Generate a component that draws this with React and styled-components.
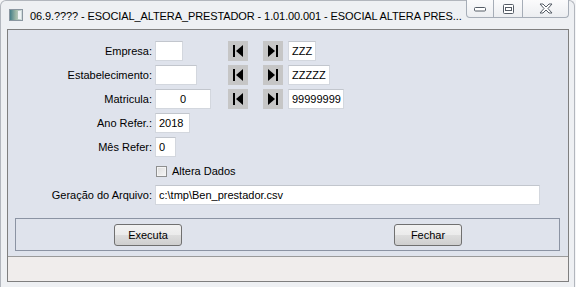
import React from "react";
import styled, { createGlobalStyle } from "styled-components";

const GlobalStyle = createGlobalStyle`
  body {
    margin: 0;
    background: #f4f5f7;
    font-family: "Liberation Sans", Arial, sans-serif;
  }
`;

const Window = styled.div`
  width: 575px;
  height: 287px;
  box-sizing: border-box;
  background: #eef0f3;
  border: 1px solid #b2b6bd;
  border-bottom: none;
  border-radius: 6px 6px 0 0;
  padding: 0 5px 0 6px;
  display: flex;
  flex-direction: column;
`;

const TitleBar = styled.div`
  height: 28px;
  display: flex;
  align-items: flex-start;
`;

const TitleLeft = styled.div`
  flex: 1;
  min-width: 0;
  overflow: hidden;
  height: 28px;
  display: flex;
  align-items: center;
  padding-left: 2px;
  gap: 7px;

  svg {
    flex-shrink: 0;
  }
`;

const TitleText = styled.span`
  font-size: 11px;
  letter-spacing: -0.1px;
  color: #000;
  white-space: nowrap;
  margin-top: 2px;
`;

const Controls = styled.div`
  display: flex;
  flex-shrink: 0;
  margin-top: -1px;
`;

const CtrlBtn = styled.div`
  width: ${(p) => p.$w}px;
  height: 18px;
  box-sizing: border-box;
  border: 1px solid #a6adb7;
  border-left: ${(p) => (p.$first ? "1px solid #a6adb7" : "none")};
  border-top: none;
  background: linear-gradient(#fbfbfc, #eceef1);
  border-radius: ${(p) => p.$radius || "0"};
  display: flex;
  align-items: center;
  justify-content: center;
`;

const Client = styled.div`
  height: 253px;
  box-sizing: border-box;
  border: 1px solid #7f7f7f;
  display: flex;
  flex-direction: column;
`;

const FormArea = styled.div`
  flex: 1;
  background: #dfe3ec;
  padding-top: 11px;
  display: flex;
  flex-direction: column;
`;

const Rows = styled.div`
  display: flex;
  flex-direction: column;
  gap: 4px;
`;

const Row = styled.div`
  display: grid;
  grid-template-columns: 144px 1fr;
  column-gap: 3px;
  height: 20px;
  align-items: center;
`;

const Label = styled.label`
  font-size: 11px;
  color: #000;
  text-align: right;
  white-space: nowrap;
`;

const Field = styled.div`
  display: flex;
  align-items: center;
  height: 20px;
`;

const FieldSlot = styled.div`
  width: 73px;
  display: flex;
`;

const Input = styled.div`
  width: ${(p) => p.$w}px;
  height: 20px;
  box-sizing: border-box;
  background: #fff;
  border: 1px solid #d3d7de;
  border-top-color: #c2c6cd;
  font-size: 11px;
  color: #000;
  line-height: 18px;
  padding: 0 3px;
  text-align: ${(p) => p.$align || "left"};
  white-space: nowrap;
  overflow: hidden;
`;

const NavBtn = styled.div`
  width: 20px;
  height: 20px;
  background: #c6c6c6;
  margin-right: ${(p) => p.$mr}px;
  display: flex;
  align-items: center;
  justify-content: center;
`;

const CheckWrap = styled.div`
  display: flex;
  align-items: center;
  gap: 5px;
  padding-left: 1px;
  font-size: 11px;
`;

const CheckBox = styled.span`
  width: 11px;
  height: 11px;
  box-sizing: border-box;
  border: 1px solid #8e8f8f;
  background: linear-gradient(135deg, #dcdcdc, #f6f6f6);
  box-shadow: inset 0 0 0 1px #f4f4f4;
`;

const Group = styled.div`
  margin: 13px 8px 0 7px;
  height: 33px;
  box-sizing: border-box;
  border: 1px solid #8b93a3;
  display: flex;
  align-items: center;
  padding-left: 98px;
  gap: 212px;
`;

const Button = styled.button`
  width: 68px;
  height: 22px;
  box-sizing: border-box;
  border: 1px solid #707070;
  border-radius: 3px;
  background: linear-gradient(#f2f2f2 0%, #ebebeb 50%, #dddddd 51%, #cfcfcf 100%);
  font-family: "Liberation Sans", Arial, sans-serif;
  font-size: 11px;
  color: #000;
  padding: 0;
`;

const StatusBar = styled.div`
  height: 24px;
  border-top: 1px solid #9a9a9a;
  background: #f0edec;
`;

const FirstIcon = () => (
  <svg width="12" height="14" viewBox="0 0 12 14">
    <rect x="1" y="1" width="2" height="12" fill="#000" />
    <polygon points="11,1 4,7 11,13" fill="#000" />
  </svg>
);

const LastIcon = () => (
  <svg width="12" height="14" viewBox="0 0 12 14">
    <polygon points="1,1 8,7 1,13" fill="#000" />
    <rect x="9" y="1" width="2" height="12" fill="#000" />
  </svg>
);

const AppIcon = () => (
  <svg width="14" height="12" viewBox="0 0 14 12">
    <defs>
      <linearGradient id="ag" x1="0" x2="1">
        <stop offset="0" stopColor="#3d7a86" />
        <stop offset="0.5" stopColor="#9fb9a8" />
        <stop offset="1" stopColor="#d9e2e6" />
      </linearGradient>
    </defs>
    <rect x="0.5" y="0.5" width="13" height="11" fill="url(#ag)" stroke="#8a96a0" />
    <rect x="9" y="2" width="3" height="8" fill="#eef3f5" />
  </svg>
);

const NavRow = ({ label, w, align, value, right, rightW }) => (
  <Row>
    <Label>{label}</Label>
    <Field>
      <FieldSlot>
        <Input $w={w} $align={align}>{value}</Input>
      </FieldSlot>
      <NavBtn $mr={15}>
        <FirstIcon />
      </NavBtn>
      <NavBtn $mr={5}>
        <LastIcon />
      </NavBtn>
      <Input $w={rightW}>{right}</Input>
    </Field>
  </Row>
);

export default function App() {
  return (
    <>
      <GlobalStyle />
      <Window>
        <TitleBar>
          <TitleLeft>
            <AppIcon />
            <TitleText>
              06.9.???? - ESOCIAL_ALTERA_PRESTADOR - 1.01.00.001 - ESOCIAL ALTERA PRES...
            </TitleText>
          </TitleLeft>
          <Controls>
            <CtrlBtn $w={28} $first $radius="0 0 0 4px">
              <svg width="12" height="6" viewBox="0 0 12 6">
                <rect x="0.5" y="1.5" width="11" height="3.5" rx="1" fill="#fff" stroke="#555c66" />
              </svg>
            </CtrlBtn>
            <CtrlBtn $w={29}>
              <svg width="11" height="10" viewBox="0 0 11 10">
                <rect x="0.5" y="0.5" width="10" height="9" rx="1" fill="#fff" stroke="#555c66" />
                <rect x="2.5" y="3.5" width="6" height="3" fill="#fff" stroke="#555c66" />
              </svg>
            </CtrlBtn>
            <CtrlBtn $w={46} $radius="0 0 4px 0">
              <svg width="14" height="11" viewBox="0 0 14 11">
                <path
                  d="M1 1 H4 L7 4 L10 1 H13 L9 5.5 L13 10 H10 L7 7 L4 10 H1 L5 5.5 Z"
                  fill="#fff"
                  stroke="#555c66"
                  strokeLinejoin="round"
                />
              </svg>
            </CtrlBtn>
          </Controls>
        </TitleBar>
        <Client>
          <FormArea>
            <Rows>
              <NavRow label="Empresa:" w={28} value="" right="ZZZ" rightW={28} />
              <NavRow label="Estabelecimento:" w={42} value="" right="ZZZZZ" rightW={42} />
              <NavRow label="Matricula:" w={56} align="center" value="0" right="99999999" rightW={56} />
              <Row>
                <Label>Ano Refer.:</Label>
                <Field>
                  <Input $w={35}>2018</Input>
                </Field>
              </Row>
              <Row>
                <Label>Mês Refer:</Label>
                <Field>
                  <Input $w={21}>0</Input>
                </Field>
              </Row>
              <Row>
                <span />
                <CheckWrap>
                  <CheckBox />
                  <span>Altera Dados</span>
                </CheckWrap>
              </Row>
              <Row>
                <Label>Geração do Arquivo:</Label>
                <Field>
                  <Input $w={385}>c:\tmp\Ben_prestador.csv</Input>
                </Field>
              </Row>
            </Rows>
            <Group>
              <Button>Executa</Button>
              <Button>Fechar</Button>
            </Group>
          </FormArea>
          <StatusBar />
        </Client>
      </Window>
    </>
  );
}
